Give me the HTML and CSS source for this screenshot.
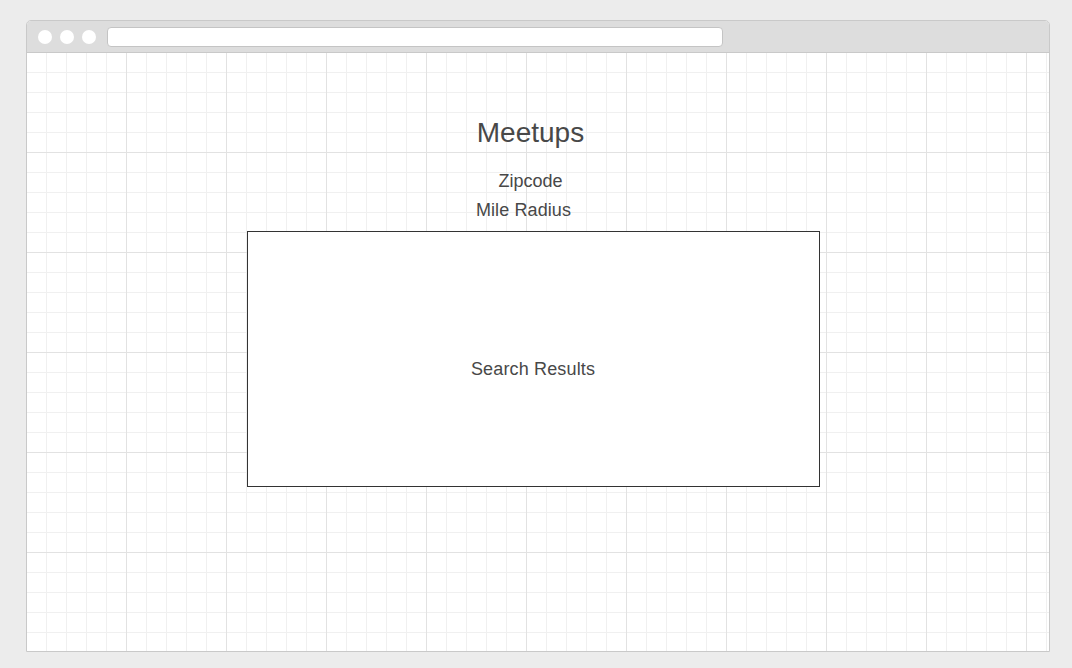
FILE: index.html
```html
<!DOCTYPE html>
<html>
<head>
<meta charset="utf-8">
<link rel="stylesheet" href="styles.css">
</head>
<body>
<div class="window">
  <div class="titlebar">
    <span class="dot"></span>
    <span class="dot"></span>
    <span class="dot"></span>
    <div class="url"></div>
  </div>
  <div class="content">
    <div class="panel">
      <h1 class="title">Meetups</h1>
      <div class="label zip">Zipcode</div>
      <div class="label radius">Mile Radius</div>
      <div class="results">Search Results</div>
    </div>
  </div>
</div>
</body>
</html>
```
FILE: styles.css
```css
html, body {
  margin: 0;
  padding: 0;
  background: #ececec;
}
body {
  padding: 20px 0 0 26px;
  font-family: "Liberation Sans", Arial, sans-serif;
  color: #484848;
}
.window {
  width: 1022px;
  height: 630px;
  border: 1px solid #c9c9c9;
  border-radius: 5px 5px 0 0;
  display: flex;
  flex-direction: column;
  background: #fff;
  overflow: hidden;
}
.titlebar {
  flex: none;
  background: #dddddd;
  border-bottom: 1px solid #c9c9c9;
  display: flex;
  align-items: center;
  padding-left: 11px;
  gap: 8px;
  box-sizing: border-box;
  height: 32px;
}
.dot {
  width: 14px;
  height: 14px;
  border-radius: 50%;
  background: #fff;
  flex: none;
}
.url {
  width: 614px;
  height: 18px;
  margin-left: 3px;
  background: #fff;
  border: 1px solid #c4c4c4;
  border-radius: 4px;
  flex: none;
}
.content {
  flex: 1;
  background-color: #fff;
  background-image:
    linear-gradient(to right, #e2e2e2 1px, transparent 1px),
    linear-gradient(to bottom, #e2e2e2 1px, transparent 1px),
    linear-gradient(to right, #f0f0f0 1px, transparent 1px),
    linear-gradient(to bottom, #f0f0f0 1px, transparent 1px);
  background-size: 100px 100px, 100px 100px, 20px 20px, 20px 20px;
  background-position: 99px 99px, 99px 99px, 19px 19px, 19px 19px;
  display: flex;
  flex-direction: column;
  align-items: center;
  padding-right: 9px;
}
.panel {
  width: 574px;
  display: flex;
  flex-direction: column;
  align-items: center;
  padding-top: 64px;
}
.title {
  margin: 0;
  font-size: 28px;
  line-height: 32px;
  font-weight: normal;
  margin-right: 6px;
}
.label {
  font-size: 18px;
  line-height: 29px;
}
.zip {
  margin-top: 18px;
  margin-right: 6px;
}
.radius {
  margin-right: 20px;
  letter-spacing: 0.1px;
}
.results {
  margin-top: 6px;
  width: 571px;
  height: 234px;
  padding-top: 20px;
  border: 1px solid #333;
  background: #fff;
  display: flex;
  align-items: center;
  justify-content: center;
  font-size: 18px;
  line-height: 29px;
  letter-spacing: 0.15px;
  margin-left: -1px;
}
```
